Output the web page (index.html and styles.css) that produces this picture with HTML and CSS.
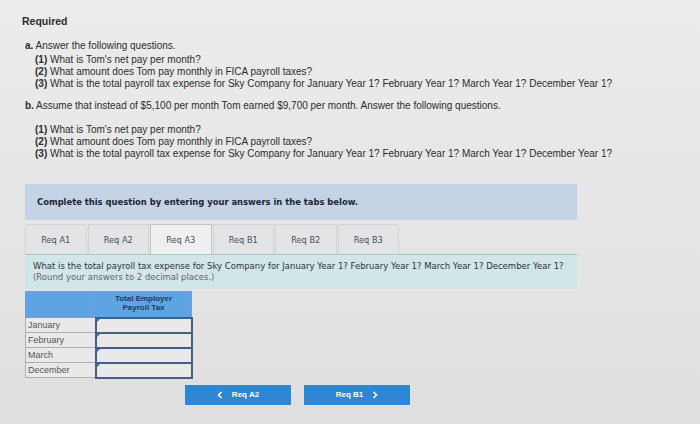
FILE: index.html
```
<!DOCTYPE html>
<html lang="en">
<head>
    <meta charset="UTF-8">
    <meta name="viewport" content="width=device-width, initial-scale=1.0">
    <title>Required - Payroll Tax</title>
    <link rel="stylesheet" href="styles.css">
</head>
<body>
    <div class="page">
        <h3 class="req-title">Required</h3>

        <div class="part">
            <p class="part-line"><span class="part-label">a.</span> Answer the following questions.</p>
            <p class="q"><b>(1)</b> What is Tom's net pay per month?</p>
            <p class="q"><b>(2)</b> What amount does Tom pay monthly in FICA payroll taxes?</p>
            <p class="q"><b>(3)</b> What is the total payroll tax expense for Sky Company for January Year 1? February Year 1? March Year 1? December Year 1?</p>
        </div>

        <div class="part part-b">
            <p class="part-line"><span class="part-label">b.</span> Assume that instead of $5,100 per month Tom earned $9,700 per month. Answer the following questions.</p>
            <div class="q-group">
                <p class="q"><b>(1)</b> What is Tom's net pay per month?</p>
                <p class="q"><b>(2)</b> What amount does Tom pay monthly in FICA payroll taxes?</p>
                <p class="q"><b>(3)</b> What is the total payroll tax expense for Sky Company for January Year 1? February Year 1? March Year 1? December Year 1?</p>
            </div>
        </div>

        <div class="panel">
            <div class="instructions">Complete this question by entering your answers in the tabs below.</div>

            <div class="tabs">
                <div class="tab">Req A1</div>
                <div class="tab">Req A2</div>
                <div class="tab active">Req A3</div>
                <div class="tab">Req B1</div>
                <div class="tab">Req B2</div>
                <div class="tab">Req B3</div>
            </div>

            <div class="tab-body">
                <p>What is the total payroll tax expense for Sky Company for January Year 1? February Year 1? March Year 1? December Year 1?</p>
                <p class="hint">(Round your answers to 2 decimal places.)</p>
            </div>

            <table class="answer-table">
                <tr>
                    <th class="blank"></th>
                    <th>Total Employer<br>Payroll Tax</th>
                </tr>
                <tr>
                    <td class="label">January</td>
                    <td class="entry"><input type="text"></td>
                </tr>
                <tr>
                    <td class="label">February</td>
                    <td class="entry"><input type="text"></td>
                </tr>
                <tr>
                    <td class="label">March</td>
                    <td class="entry"><input type="text"></td>
                </tr>
                <tr>
                    <td class="label">December</td>
                    <td class="entry"><input type="text"></td>
                </tr>
            </table>

            <div class="nav">
                <button class="nav-btn">
                    <svg width="6" height="8" viewBox="0 0 6 8"><path d="M4.5 1 L1.5 4 L4.5 7" fill="none" stroke="#fff" stroke-width="1.6"/></svg>
                    Req A2
                </button>
                <button class="nav-btn">
                    Req B1
                    <svg width="6" height="8" viewBox="0 0 6 8"><path d="M1.5 1 L4.5 4 L1.5 7" fill="none" stroke="#fff" stroke-width="1.6"/></svg>
                </button>
            </div>
        </div>
    </div>
</body>
</html>
```

FILE: styles.css
```
body {
    margin: 0;
    font-family: 'Liberation Sans', Arial, sans-serif;
    color: #2c2c2c;
    background: linear-gradient(to bottom, #ececec, #dfdfdf);
    height: 424px;
    overflow: hidden;
}
.page {
    padding: 14px 0 0 22px;
}
.req-title {
    margin: 0 0 12px 0;
    font-size: 10.5px;
    line-height: 14px;
    font-weight: bold;
}
.part {
    font-size: 10px;
    line-height: 12px;
}
.part p {
    margin: 0;
}
.part-line {
    padding-left: 3px;
}
.part-label {
    font-weight: bold;
}
.q {
    padding-left: 13px;
}
.part .part-line + .q {
    margin-top: 2px;
}
.part-b {
    margin-top: 10px;
}
.part-b .q-group {
    margin-top: 12px;
}

/* answer area */
.panel {
    margin-top: 24px;
    margin-left: 3px;
    width: 552px;
    font-family: 'DejaVu Sans', Verdana, sans-serif;
}
.instructions {
    background: #c4d4e6;
    height: 36px;
    padding-left: 12px;
    display: flex;
    align-items: center;
    font-size: 8.4px;
    font-weight: bold;
    color: #1e2430;
}
.tabs {
    display: flex;
    gap: 1px;
    margin-top: 4px;
}
.tab {
    width: 61.5px;
    height: 30px;
    display: flex;
    align-items: center;
    justify-content: center;
    background: #e2e4e5;
    border: 1px solid #d2d5d7;
    border-bottom: none;
    box-sizing: border-box;
    font-size: 8.2px;
    color: #4a5058;
}
.tab.active {
    background: #efefef;
    border-color: #c2c6c9;
}
.tab-body {
    background: #d1e6e8;
    border-top: 1px solid #a9c8cc;
    height: 35px;
    box-sizing: border-box;
    padding: 6px 0 0 8px;
    font-size: 8.5px;
    line-height: 10.5px;
    color: #2e3238;
}
.tab-body p {
    margin: 0;
}
.tab-body .hint {
    color: #6a625c;
}

.answer-table {
    margin-top: 2px;
    border-collapse: collapse;
    font-family: 'Liberation Sans', Arial, sans-serif;
}
.answer-table th {
    background: #5fa4e2;
    height: 26px;
    width: 96px;
    padding: 0;
    border: 1px solid #7aa0c8;
    font-size: 8px;
    line-height: 9px;
    color: #1d3a66;
    vertical-align: top;
    padding-top: 2px;
    box-sizing: border-box;
}
.answer-table th.blank {
    width: 70px;
}
.answer-table td {
    height: 15px;
    padding: 0;
    box-sizing: border-box;
    background: #e9e9e9;
}
.answer-table td.label {
    border: 1px solid #a9b0bb;
    font-size: 9px;
    color: #555;
    padding-left: 2px;
}
.answer-table td.entry {
    border: 2px solid #445f86;
    position: relative;
}
.answer-table td.entry::before {
    content: "";
    position: absolute;
    left: 0;
    top: 0;
    border-left: 3px solid #3d6fb0;
    border-bottom: 3px solid transparent;
}
.answer-table input {
    display: block;
    width: 100%;
    height: 11px;
    border: none;
    background: transparent;
    padding: 0;
}

.nav {
    display: flex;
    gap: 13px;
    margin-top: 6px;
    margin-left: 160px;
}
.nav-btn {
    width: 106px;
    height: 20px;
    background: #2e86d6;
    color: white;
    border: none;
    font-family: 'Liberation Sans', Arial, sans-serif;
    font-size: 8px;
    font-weight: bold;
    display: flex;
    align-items: center;
    justify-content: center;
    gap: 9px;
    padding: 0;
}
```
